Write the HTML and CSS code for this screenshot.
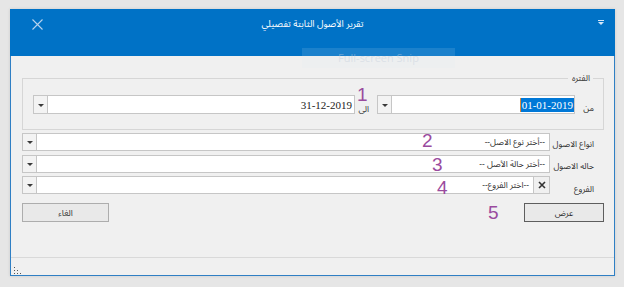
FILE: index.html
```html
<!DOCTYPE html>
<html lang="ar">
<head>
<meta charset="utf-8">
<title>تقرير الأصول الثابتة تفصيلي</title>
<link rel="stylesheet" href="styles.css">
</head>
<body>
<div class="window">
  <div class="titlebar">
    <svg class="close" width="11" height="11" viewBox="0 0 11 11"><path d="M0.5 0.5L10.5 10.5M10.5 0.5L0.5 10.5" stroke="#b8d3ee" stroke-width="1.1" fill="none"/></svg>
    <div class="title">تقرير الأصول الثابتة تفصيلي</div>
    <svg class="sysmenu" width="6" height="6" viewBox="0 0 6 6"><rect x="0" y="0" width="6" height="1" fill="#d4e6f7"/><path d="M0 2H6L3 5Z" fill="#d4e6f7"/></svg>
  </div>
  <div class="snip">Full-screen Snip</div>
  <div class="body" dir="rtl">
    <div class="group">
      <span class="legend">الفتره</span>
      <div class="period-row">
        <span class="lbl lbl-from">من</span>
        <div class="combo date-from">
          <span class="val"><span class="sel">01-01-2019</span></span>
          <span class="drop"><i class="tri"></i></span>
        </div>
        <span class="lbl lbl-to">الى</span>
        <div class="combo date-to">
          <span class="val">31-12-2019</span>
          <span class="drop"><i class="tri"></i></span>
        </div>
      </div>
    </div>
    <div class="field f1">
      <span class="flabel">انواع الاصول</span>
      <div class="combo wide">
        <span class="val ph">--أختر نوع الاصل--</span>
        <span class="drop"><i class="tri"></i></span>
      </div>
    </div>
    <div class="field f2">
      <span class="flabel">حاله الاصول</span>
      <div class="combo wide">
        <span class="val ph">--أختر حالة الأصل --</span>
        <span class="drop"><i class="tri"></i></span>
      </div>
    </div>
    <div class="field f3">
      <span class="flabel low">الفروع</span>
      <div class="combo wide">
        <span class="clear"><svg width="8" height="8" viewBox="0 0 8 8"><path d="M1 1L7 7M7 1L1 7" stroke="#333" stroke-width="1.6"/></svg></span>
        <span class="val ph">--اختر الفروع--</span>
        <span class="drop"><i class="tri"></i></span>
      </div>
    </div>
    <div class="buttons">
      <button class="btn btn-ok">عرض</button>
      <button class="btn btn-cancel">الغاء</button>
    </div>
    <div class="statusbar">
      <svg class="grip" width="8" height="7" viewBox="0 0 8 7">
        <rect x="0" y="0" width="1" height="1" fill="#555"/>
        <rect x="0" y="3" width="1" height="1" fill="#555"/>
        <rect x="3" y="3" width="1" height="1" fill="#555"/>
        <rect x="0" y="6" width="1" height="1" fill="#555"/>
        <rect x="3" y="6" width="1" height="1" fill="#555"/>
        <rect x="6" y="6" width="1" height="1" fill="#555"/>
      </svg>
    </div>
  </div>
  <span class="mark m1">1</span>
  <span class="mark m2">2</span>
  <span class="mark m3">3</span>
  <span class="mark m4">4</span>
  <span class="mark m5">5</span>
</div>
</body>
</html>
```
FILE: styles.css
```css
html, body {
  margin: 0;
  padding: 0;
}
body {
  background: #e6e6e6;
  width: 624px;
  height: 287px;
  overflow: hidden;
  font-family: "Noto Sans Arabic", "Noto Naskh Arabic", "DejaVu Sans", sans-serif;
}
.window {
  position: relative;
  box-sizing: border-box;
  margin: 9px 0 0 10px;
  width: 605px;
  height: 267px;
  border: 1px solid #2f7fc4;
  border-top: 0;
  background: #f0f0f0;
  display: flex;
  flex-direction: column;
  box-shadow: 0 0 3px rgba(0,0,0,0.12);
}
.titlebar {
  height: 47px;
  margin: 0 -1px;
  background: #0072c6;
  display: grid;
  grid-template-columns: 1fr auto 1fr;
  align-items: start;
  padding: 0 11px;
  flex: none;
}
.close {
  margin-top: 10px;
  margin-left: 11px;
  justify-self: start;
}
.title {
  color: #ffffff;
  font-size: 9.3px;
  line-height: 14px;
  margin-top: 8px;
  white-space: nowrap;
}
.sysmenu {
  margin-top: 11px;
  justify-self: end;
}
.snip {
  position: absolute;
  left: 291px;
  top: 39px;
  width: 153px;
  height: 20px;
  background: rgba(225, 236, 248, 0.12);
  color: rgba(196, 206, 218, 0.45);
  font-family: "Open Sans", sans-serif;
  font-size: 11px;
  line-height: 20px;
  text-align: center;
}
.body {
  flex: 1;
  display: flex;
  flex-direction: column;
  padding: 22px 10px 0 11px;
}
.group {
  position: relative;
  height: 52px;
  box-sizing: border-box;
  border: 1px solid #d6d6d6;
  padding: 16px 0 0 10px;
}
.legend {
  position: absolute;
  right: 10px;
  top: -8px;
  padding: 0 3px 0 4px;
  background: #f0f0f0;
  font-size: 8.5px;
  line-height: 14px;
  color: #333;
}
.period-row {
  display: flex;
  height: 19px;
}
.lbl {
  font-size: 8.5px;
  color: #333;
  box-sizing: border-box;
  flex: none;
  white-space: nowrap;
}
.lbl-from {
  width: 28px;
  padding-right: 9px;
  padding-top: 7px;
  line-height: 12px;
}
.lbl-to {
  width: 22px;
  padding-right: 8px;
  padding-top: 8px;
  line-height: 12px;
}
.combo {
  display: flex;
  box-sizing: border-box;
  border: 1px solid #c6c6c6;
  background: #ffffff;
  height: 100%;
}
.date-from {
  width: 198px;
  flex: none;
}
.date-to {
  flex: 1;
}
.val {
  flex: 1;
  font-size: 8.5px;
  color: #222;
  padding: 0 3px;
  display: flex;
  align-items: center;
  white-space: nowrap;
}
.date-from .val, .date-to .val {
  font-family: "Liberation Serif", serif;
  font-size: 11px;
  padding: 0 2px;
}
.date-from .val {
  padding: 0 0 0 1px;
}
.sel {
  background: #0078d7;
  color: #ffffff;
  line-height: 14px;
  padding: 0 1px 0 1px;
  border-left: 1px solid #e0893a;
}
.drop {
  width: 14px;
  flex: none;
  box-sizing: border-box;
  background: #f3f3f3;
  border-right: 1px solid #c6c6c6;
  display: flex;
  align-items: center;
  justify-content: center;
}
.tri {
  width: 0;
  height: 0;
  border-left: 3px solid transparent;
  border-right: 3px solid transparent;
  border-top: 3px solid #3a3a3a;
  margin-top: 1px;
}
.field {
  display: flex;
  height: 18px;
}
.f1 { margin-top: 3px; }
.f2 { margin-top: 4px; }
.f3 { margin-top: 3px; }
.flabel {
  width: 54px;
  flex: none;
  box-sizing: border-box;
  padding-right: 10px;
  font-size: 8.5px;
  line-height: 14px;
  padding-top: 4px;
  color: #333;
  white-space: nowrap;
}
.flabel.low {
  padding-top: 6px;
}
.wide {
  flex: 1;
}
.ph {
  color: #333;
  padding-right: 4px;
}
.clear {
  width: 16px;
  flex: none;
  box-sizing: border-box;
  background: #f0f0f0;
  border-left: 1px solid #c6c6c6;
  display: flex;
  align-items: center;
  justify-content: center;
}
.buttons {
  display: flex;
  justify-content: space-between;
  margin-top: 9px;
  height: 19px;
}
.btn {
  font-family: "Noto Sans Arabic", "DejaVu Sans", sans-serif;
  font-size: 8.5px;
  color: #333;
  background: #e9e9e9;
  border: 1px solid #adadad;
  padding: 0;
  height: 19px;
  box-sizing: border-box;
}
.btn-ok {
  width: 80px;
  border-color: #5e5e5e;
}
.btn-cancel {
  width: 87px;
}
.statusbar {
  margin-top: auto;
  margin-left: -11px;
  margin-right: -10px;
  height: 18px;
  box-sizing: border-box;
  border-top: 1px solid #d9d9d9;
  display: flex;
  align-items: flex-end;
  justify-content: flex-end;
  padding: 0 0 1px 3px;
}
.grip {
  display: block;
}
.mark {
  position: absolute;
  font-family: "Liberation Sans", "Open Sans", sans-serif;
  font-size: 19px;
  line-height: 19px;
  color: #9a4b9e;
}
.m1 { left: 346px; top: 76px; }
.m2 { left: 411px; top: 122px; }
.m3 { left: 421px; top: 146px; }
.m4 { left: 426px; top: 169px; }
.m5 { left: 477px; top: 194px; }
```
